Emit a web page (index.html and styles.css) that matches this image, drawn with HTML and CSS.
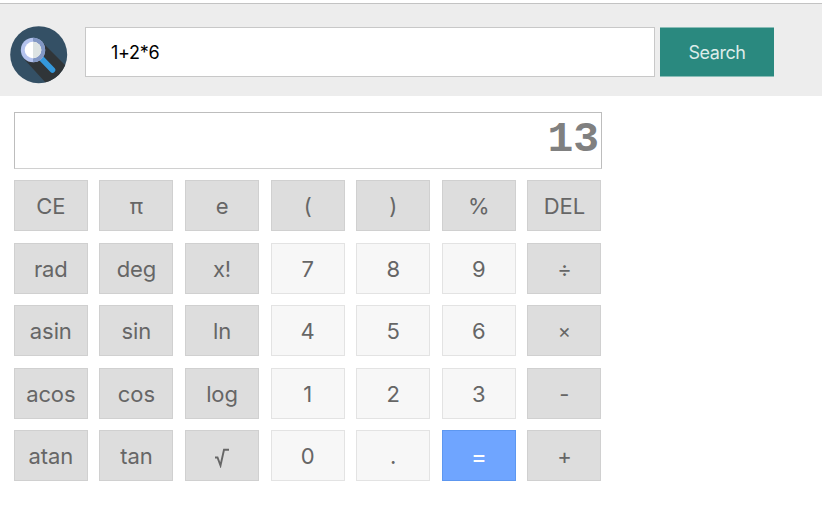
FILE: index.html
```html
<!DOCTYPE html>
<html lang="en">
<head>
<meta charset="utf-8">
<title>Calculator search</title>
<link rel="stylesheet" href="styles.css">
</head>
<body>
<header class="bar">
  <svg class="logo" viewBox="0 0 58 58" aria-hidden="true">
    <defs><clipPath id="disc"><circle cx="28.7" cy="28.7" r="28.5"/></clipPath></defs>
    <circle cx="28.7" cy="28.7" r="28.5" fill="#345065"/>
    <path clip-path="url(#disc)" d="M32 16L62 46V68H46L14.5 33.5Z" fill="#303538"/>
    <path d="M30.500 31.500L42.500 44" stroke="#3498db" stroke-width="5.6" stroke-linecap="round"/>
    <circle cx="23" cy="24" r="12.200" fill="#b4c3ee"/>
    <path d="M23 11.800a12.200 12.200 0 0 1 0 24.400z" fill="#8297c4"/>
    <circle cx="23" cy="24" r="8.300" fill="#fff"/>
    <path d="M23 15.700a8.300 8.300 0 0 1 0 16.600z" fill="#dde3e3"/>
  </svg>
  <input class="query" type="text" value="1+2*6" aria-label="Search">
  <button class="search">Search</button>
</header>
<main class="calc">
  <output class="display">13</output>
  <div class="keys">
    <button>CE</button><button>π</button><button>e</button><button>(</button><button>)</button><button>%</button><button>DEL</button>
    <button>rad</button><button>deg</button><button>x!</button><button class="num">7</button><button class="num">8</button><button class="num">9</button><button class="op">÷</button>
    <button>asin</button><button>sin</button><button>ln</button><button class="num">4</button><button class="num">5</button><button class="num">6</button><button class="times">×</button>
    <button>acos</button><button>cos</button><button>log</button><button class="num">1</button><button class="num">2</button><button class="num">3</button><button class="op">-</button>
    <button>atan</button><button>tan</button><button class="root" aria-label="square root"><svg viewBox="0 0 16 20" aria-hidden="true"><path d="M1 9.500H3.500L6.500 17.500L10 1.800H15"/></svg></button><button class="num">0</button><button class="num">.</button><button class="equals">=</button><button class="op">+</button>
  </div>
</main>
</body>
</html>
```
FILE: styles.css
```css
* { box-sizing: border-box; }
body {
  margin: 0;
  padding-top: 3px;
  background: #fff;
  font-family: Inter, "Liberation Sans", sans-serif;
}
button, input { font-family: inherit; margin: 0; border-radius: 0; }
.bar {
  display: flex;
  align-items: flex-start;
  width: 822px;
  height: 93px;
  padding: 23px 0 0 10px;
  background: #ededed;
  border-top: 1px solid #c3c3c3;
}
.logo { width: 58px; height: 58px; margin-top: -1px; }
.query {
  width: 570px;
  height: 50px;
  margin-left: 17px;
  padding: 1px 25px 0;
  border: 1px solid #c8c8c8;
  background: #fff;
  color: #000;
  font-size: 18px;
  letter-spacing: -0.3px;
}
.search {
  width: 114px;
  height: 50px;
  margin-left: 5px;
  padding: 1px 0 0;
  border: solid #8abdb7;
  border-width: 1px 0;
  background: #2a897f;
  color: #dcece9;
  font-size: 18px;
  letter-spacing: -0.45px;
}
.calc { width: 588px; margin: 16px 0 0 14px; }
.display {
  display: block;
  height: 57px;
  padding: 2px 2px 0 0;
  border: 1px solid #bdbdbd;
  border-bottom-color: #d0d0d0;
  color: #808080;
  font: bold 43px/50px "Liberation Mono", monospace;
  text-align: right;
}
.keys {
  display: grid;
  grid-template-columns: repeat(7, 74px);
  grid-auto-rows: 51px;
  gap: 11.6px;
  margin: 11px 0 0 -0.2px;
}
.keys button {
  padding: 1px 0 0;
  border: 1px solid #d0d0d0;
  background: #ddd;
  color: #666;
  font-size: 22px;
  letter-spacing: -0.1px;
}
.keys .num { background: #f7f7f7; border-color: #e3e3e3; }
.keys .op { font-size: 22px; }
.keys .times { font-size: 20px; }
.keys .equals { background: #6fa5ff; border-color: #5d97f0; color: #fff; font-size: 24px; }
.root svg {
  display: block;
  width: 16px;
  height: 20px;
  margin: 3px auto 0;
  fill: none;
  stroke: #666;
  stroke-width: 1.9;
}
```
